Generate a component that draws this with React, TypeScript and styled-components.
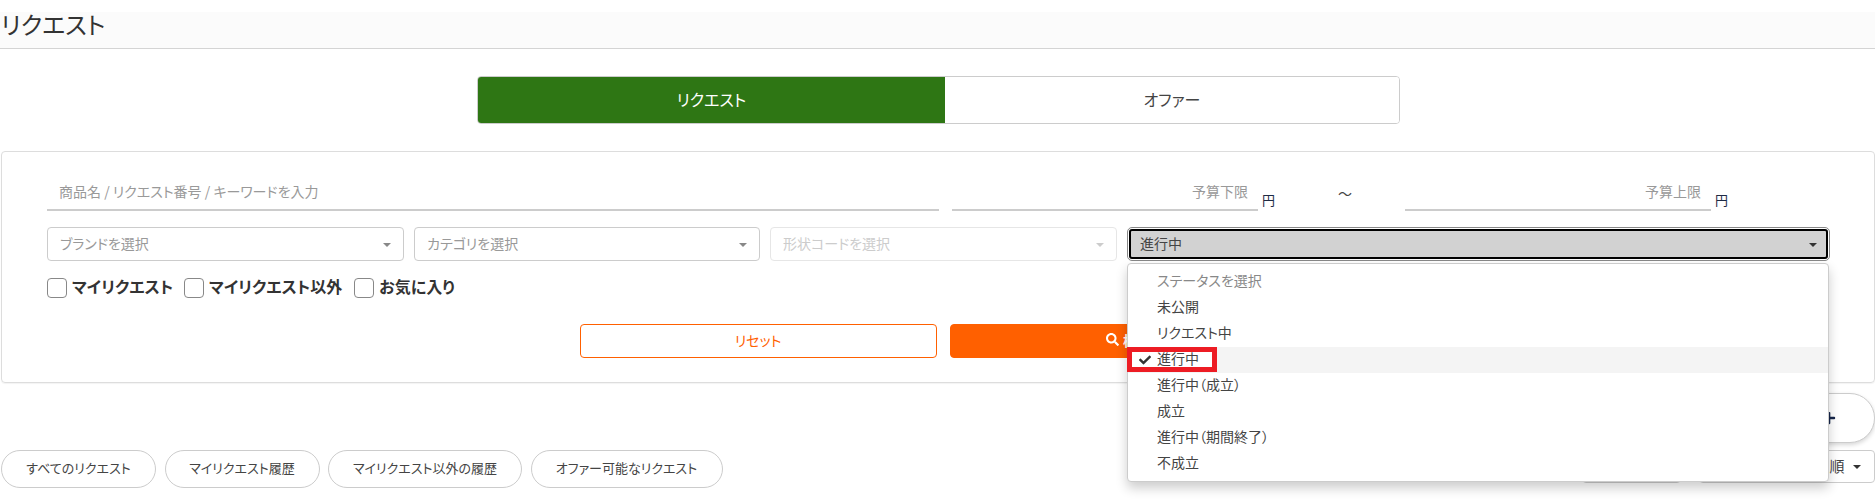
import React from "react";
import styled, { createGlobalStyle } from "styled-components";
import { FaCheck, FaPlus, FaSearch } from "react-icons/fa";

const Global = createGlobalStyle`
  html, body { margin: 0; padding: 0; background: #fff; }
  body {
    width: 1875px;
    height: 499px;
    overflow: hidden;
    font-family: "Noto Sans CJK JP", "Noto Sans", sans-serif;
    font-feature-settings: "palt";
    color: #444;
    font-size: 14px;
  }
  * { box-sizing: border-box; }
  input, button { font-family: inherit; font-feature-settings: inherit; }
`;

const Page = styled.div`
  padding-top: 12px;
`;

const Header = styled.header`
  height: 37px;
  background: #fbfbfb;
  border-bottom: 1px solid #d4d4d4;
  padding-bottom: 13px;
  display: flex;
  align-items: center;
`;

const Title = styled.h1`
  margin: 0 0 0 1px;
  font-size: 24px;
  font-weight: 400;
  line-height: 24px;
  color: #333;
`;

const Tabs = styled.div`
  width: 923px;
  height: 48px;
  margin: 27px 0 0 477px;
  display: flex;
  border: 1px solid #ccc;
  border-radius: 4px;
  overflow: hidden;
`;

const Tab = styled.div<{ $active?: boolean }>`
  flex: ${(p) => (p.$active ? "0 0 467px" : "1")};
  display: flex;
  align-items: center;
  justify-content: center;
  padding-bottom: 3px;
  background: ${(p) => (p.$active ? "#2e7614" : "#fff")};
  color: ${(p) => (p.$active ? "#fff" : "#444")};
  font-size: 16px;
`;

const Panel = styled.section`
  margin: 27px 0 0 1px;
  height: 232px;
  border: 1px solid #ddd;
  border-radius: 4px;
  box-shadow: 0 1px 1px rgba(0, 0, 0, 0.05);
  padding: 23px 0 0 45px;
`;

const InputRow = styled.div`
  display: flex;
  align-items: flex-end;
  height: 36px;
`;

const TextField = styled.input<{ $width: number; $right?: boolean }>`
  width: ${(p) => p.$width}px;
  height: 36px;
  border: 0;
  border-bottom: 2px solid #ccc;
  outline: 0;
  background: transparent;
  padding: ${(p) => (p.$right ? "0 10px 3px 0" : "0 0 3px 12px")};
  text-align: ${(p) => (p.$right ? "right" : "left")};
  font-size: 14px;
  &::placeholder { color: #999; opacity: 1; }
`;

const Yen = styled.span`
  width: 14px;
  margin: 0 0 0 4px;
  font-size: 13px;
  line-height: 16px;
  align-self: flex-end;
  position: relative;
  top: -3px;
  color: #1e2a44;
`;

const Tilde = styled.span`
  align-self: flex-start;
  margin-top: 8px;
  width: 12px;
  font-size: 14px;
  line-height: 20px;
  color: #444;
`;

const SelectRow = styled.div`
  display: flex;
  margin-top: 16px;
`;

const Select = styled.div<{ $width: number; $gap: number; $disabled?: boolean }>`
  width: ${(p) => p.$width}px;
  margin-right: ${(p) => p.$gap}px;
  height: 34px;
  border: 1px solid ${(p) => (p.$disabled ? "#e6e6e6" : "#ccc")};
  border-radius: 4px;
  padding: 0 12px 3px;
  display: flex;
  align-items: center;
  justify-content: space-between;
  color: ${(p) => (p.$disabled ? "#ccc" : "#999")};
  font-size: 14px;
  background: #fff;
`;

const Caret = styled.i<{ $color: string }>`
  width: 0;
  height: 0;
  border-left: 4px solid transparent;
  border-right: 4px solid transparent;
  border-top: 4px solid ${(p) => p.$color};
  position: relative;
  top: 2px;
`;

const StatusWrap = styled.div`
  position: relative;
  width: 703px;
`;

const StatusButton = styled.div`
  height: 34px;
  border: 1px solid #888;
  border-radius: 5px;
  padding: 1px;
  background: #fff;
`;

const StatusInner = styled.div`
  height: 100%;
  border: 2px solid #000;
  border-radius: 3px;
  background: #d2d2d2;
  padding: 0 9px 3px;
  display: flex;
  align-items: center;
  justify-content: space-between;
  color: #444;
  font-size: 14px;
`;

const Menu = styled.ul`
  position: absolute;
  top: 36px;
  left: 0;
  width: 702px;
  height: 219px;
  margin: 0;
  padding: 5px 0 0;
  list-style: none;
  background: #fff;
  border: 1px solid #ccc;
  border-radius: 4px;
  box-shadow: 0 6px 12px rgba(0, 0, 0, 0.2);
  z-index: 5;
`;

const MenuItem = styled.li<{ $muted?: boolean; $selected?: boolean }>`
  position: relative;
  height: 26px;
  padding: 0 0 5px 29px;
  display: flex;
  align-items: center;
  font-size: 14px;
  color: ${(p) => (p.$muted ? "#888" : "#444")};
  background: ${(p) => (p.$selected ? "#f4f4f4" : "transparent")};
`;

const RedMark = styled.span`
  position: absolute;
  left: -1px;
  top: 0;
  width: 90px;
  height: 25px;
  background: #fff;
  border: 5px solid #ed1c24;
`;

const MenuCheck = styled(FaCheck)`
  position: absolute;
  left: 11px;
  top: 7px;
  width: 12px;
  height: 12px;
  color: #333;
`;

const MenuLabel = styled.span`
  position: relative;
`;

const CheckRow = styled.div`
  display: flex;
  margin-top: 17px;
  height: 20px;
  align-items: center;
`;

const CheckItem = styled.label<{ $gap: number }>`
  display: flex;
  align-items: center;
  margin-right: ${(p) => p.$gap}px;
`;

const Box = styled.span`
  width: 20px;
  height: 20px;
  border: 1px solid #888;
  border-radius: 4px;
  margin-right: 5px;
  background: #fff;
`;

const CheckLabel = styled.span`
  font-size: 16px;
  font-weight: 700;
  line-height: 20px;
  color: #333;
  position: relative;
  top: -2px;
`;

const Actions = styled.div`
  display: flex;
  justify-content: center;
  gap: 13px;
  margin: 26px 0 0 -48px;
`;

const OutlineButton = styled.button`
  width: 357px;
  height: 34px;
  padding-bottom: 4px;
  border: 1px solid #ff6000;
  border-radius: 4px;
  background: #fff;
  color: #ff6000;
  font-size: 14px;
`;

const SolidButton = styled.button`
  width: 344px;
  height: 34px;
  padding: 0 0 3px 14px;
  border: 1px solid #ff6000;
  border-radius: 4px;
  background: #ff6000;
  color: #fff;
  font-size: 14px;
  font-weight: 700;
  display: flex;
  align-items: center;
  justify-content: center;
  gap: 4px;
`;

const ActionRow = styled.div`
  display: flex;
  justify-content: flex-end;
  margin-top: 10px;
`;

const CreateButton = styled.div`
  width: 260px;
  height: 50px;
  border: 1px solid #ccc;
  border-radius: 25px;
  background: #fff;
  box-shadow: 0 2px 4px rgba(0, 0, 0, 0.16);
  display: flex;
  align-items: center;
  justify-content: flex-end;
  padding-right: 38px;
  color: #16264a;
`;

const BottomRow = styled.div`
  display: flex;
  justify-content: space-between;
  align-items: flex-start;
  margin-top: 7px;
  padding-left: 1px;
`;

const Pills = styled.div`
  display: flex;
  gap: 8.5px;
`;

const Pill = styled.div<{ $width: number }>`
  width: ${(p) => p.$width}px;
  height: 38px;
  padding-bottom: 3px;
  border: 1px solid #ccc;
  border-radius: 19px;
  display: flex;
  align-items: center;
  justify-content: center;
  font-size: 13px;
  color: #444;
  background: #fff;
`;

const SortGroup = styled.div`
  display: flex;
  gap: 18px;
`;

const SortBox = styled.div<{ $width: number }>`
  width: ${(p) => p.$width}px;
  height: 33px;
  padding: 0 13px 3px 0;
  border: 1px solid #ccc;
  border-radius: 4px;
  display: flex;
  align-items: center;
  justify-content: flex-end;
  gap: 8px;
  font-size: 15px;
  letter-spacing: 0.5px;
  color: #444;
`;

const statuses = ["未公開", "リクエスト中", "進行中", "進行中（成立）", "成立", "進行中（期間終了）", "不成立"];

export default function App() {
  return (
    <Page>
      <Global />
      <Header>
        <Title>リクエスト</Title>
      </Header>
      <Tabs>
        <Tab $active>リクエスト</Tab>
        <Tab>オファー</Tab>
      </Tabs>
      <Panel>
        <InputRow>
          <TextField $width={892} placeholder="商品名 / リクエスト番号 / キーワードを入力" />
          <TextField $width={306} $right style={{ marginLeft: 13 }} placeholder="予算下限" />
          <Yen>円</Yen>
          <Tilde style={{ marginLeft: 62 }}>〜</Tilde>
          <TextField $width={306} $right style={{ marginLeft: 55 }} placeholder="予算上限" />
          <Yen>円</Yen>
        </InputRow>
        <SelectRow>
          <Select $width={357} $gap={10}>
            ブランドを選択
            <Caret $color="#888" />
          </Select>
          <Select $width={346} $gap={10}>
            カテゴリを選択
            <Caret $color="#888" />
          </Select>
          <Select $width={347} $gap={10} $disabled>
            形状コードを選択
            <Caret $color="#ccc" />
          </Select>
          <StatusWrap>
            <StatusButton>
              <StatusInner>
                進行中
                <Caret $color="#333" />
              </StatusInner>
            </StatusButton>
            <Menu>
              <MenuItem $muted>ステータスを選択</MenuItem>
              {statuses.map((s) =>
                s === "進行中" ? (
                  <MenuItem key={s} $selected>
                    <RedMark />
                    <MenuCheck />
                    <MenuLabel>{s}</MenuLabel>
                  </MenuItem>
                ) : (
                  <MenuItem key={s}>{s}</MenuItem>
                )
              )}
            </Menu>
          </StatusWrap>
        </SelectRow>
        <CheckRow>
          <CheckItem $gap={11}>
            <Box />
            <CheckLabel>マイリクエスト</CheckLabel>
          </CheckItem>
          <CheckItem $gap={12}>
            <Box />
            <CheckLabel>マイリクエスト以外</CheckLabel>
          </CheckItem>
          <CheckItem $gap={0}>
            <Box />
            <CheckLabel>お気に入り</CheckLabel>
          </CheckItem>
        </CheckRow>
        <Actions>
          <OutlineButton>リセット</OutlineButton>
          <SolidButton>
            <FaSearch size={13} />
            検索
          </SolidButton>
        </Actions>
      </Panel>
      <ActionRow>
        <CreateButton>
          <FaPlus size={14} />
        </CreateButton>
      </ActionRow>
      <BottomRow>
        <Pills>
          <Pill $width={155}>すべてのリクエスト</Pill>
          <Pill $width={155}>マイリクエスト履歴</Pill>
          <Pill $width={194}>マイリクエスト以外の履歴</Pill>
          <Pill $width={192}>オファー可能なリクエスト</Pill>
        </Pills>
        <SortGroup>
          <SortBox $width={99} />
          <SortBox $width={176}>
            種別順
            <Caret $color="#333" />
          </SortBox>
        </SortGroup>
      </BottomRow>
    </Page>
  );
}
